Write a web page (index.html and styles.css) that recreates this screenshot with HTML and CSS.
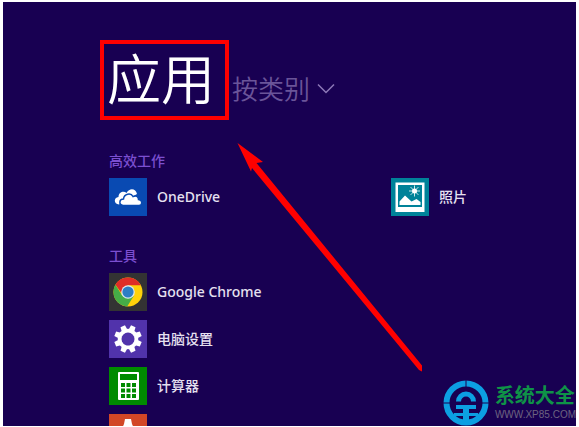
FILE: index.html
```html
<!DOCTYPE html>
<html lang="zh-CN">
<head>
<meta charset="utf-8">
<title>应用</title>
<link rel="stylesheet" href="styles.css">
</head>
<body>
<main class="screen">
  <header class="header">
    <h1 class="title">应用</h1>
    <label class="sort">
      <select class="sort-select" aria-label="排序方式"><option>按类别</option></select>
      <svg class="chevron" width="18" height="11" viewBox="0 0 18 11"><path d="M1 1.500 9 9.500 17 1.500" fill="none" stroke="#8d78b8" stroke-width="1.500"/></svg>
    </label>
  </header>

  <div class="columns">
    <div class="column">
      <section class="group">
        <h2 class="group-title">高效工作</h2>
        <a class="app" href="#">
          <svg class="tile" viewBox="0 0 38 38"><rect width="38" height="38" fill="#094ab2"/><path d="M10 26.500C4.500 26 4.500 19.500 9.500 19 9.500 14 15 12.500 17.500 15 20.500 9.500 27 10.500 28 16Z" fill="#fff"/><path d="M14 27.500C9.500 27 10 21 14.500 21 15 15.500 22 14.500 24 18.500 27 17 29.500 18.500 29.500 21.500 34 22 33.500 27.500 30 27.500Z" fill="#fff" stroke="#094ab2" stroke-width="1.500"/></svg>
          <span>OneDrive</span>
        </a>
      </section>
      <section class="group">
        <h2 class="group-title">工具</h2>
        <a class="app" href="#">
          <svg class="tile" viewBox="0 0 38 38"><rect width="38" height="38" fill="#333"/><circle cx="19" cy="19" r="14.500" fill="#ffd20a"/><path d="M6.400 11.800A14.500 14.500 0 0 1 31.800 12.200H19L12.500 20Z" fill="#df2e27"/><path d="M6.400 11.800A14.500 14.500 0 0 0 18.200 33.500L25 22.500 19 25 12.800 22Z" fill="#45ad47"/><circle cx="19" cy="19" r="6.800" fill="#dfe8f0"/><circle cx="19" cy="19" r="5.600" fill="#2d7ec4"/></svg>
          <span>Google Chrome</span>
        </a>
        <a class="app" href="#">
          <svg class="tile" viewBox="0 0 38 38"><rect width="38" height="38" fill="#5133ab"/><g fill="#fff" transform="translate(19 19) rotate(22.500)"><g id="teeth"><path id="bar" d="M-3-9-2.400-13.800H2.400L3-9V9L2.400 13.800H-2.400L-3 9Z"/><use href="#bar" transform="rotate(90)"/></g><use href="#teeth" transform="rotate(45)"/><circle r="10.300"/><circle r="6.500" fill="#5133ab"/></g></svg>
          <span>电脑设置</span>
        </a>
        <a class="app" href="#">
          <svg class="tile" viewBox="0 0 38 38"><rect width="38" height="38" fill="#008a00"/><rect x="9" y="5" width="21" height="28" rx="1" fill="#fff"/><path d="M11 7H28V13H11ZM12 16h4v4h-4ZM17.500 16h4v4h-4ZM23 16h4v4h-4ZM12 21.500h4v4h-4ZM17.500 21.500h4v4h-4ZM23 21.500h4v4h-4ZM12 27h4v4h-4ZM17.500 27h4v4h-4ZM23 27h4v4h-4Z" fill="#008a00"/></svg>
          <span>计算器</span>
        </a>
        <a class="app" href="#" aria-label="应用">
          <svg class="tile" viewBox="0 0 38 38"><rect width="38" height="38" fill="#d24726"/><path d="M16 5H22L23 10 27 19H11L15 10Z" fill="#fff"/></svg>
        </a>
      </section>
    </div>
    <div class="column column-end">
      <a class="app" href="#">
        <svg class="tile" viewBox="0 0 38 38"><rect width="38" height="38" fill="#008299"/><path d="M4.500 4.500H33.500V34H4.500Z" fill="#fff"/><path d="M7 7H31V29H7Z" fill="#008299"/><path d="M8.500 27V23.500L14 17.500 20.500 23.500 25.500 21 29.500 24V27Z" fill="#fff"/><circle cx="23.500" cy="13" r="2.500" fill="#fff"/><path d="M23.500 7.500V18.500M18 13H29M19.600 9.100 27.400 16.900M27.400 9.100 19.600 16.900" stroke="#fff" stroke-width=".8"/></svg>
        <span>照片</span>
      </a>
    </div>
  </div>

  <svg class="arrow" width="190" height="232" viewBox="0 0 190 232"><path d="M5.500 3 31 22 24.500 23 190 225.500V231.500L187 230 20 28 19 31.500Z" fill="#f00"/></svg>

  <aside class="brand">
    <svg width="46" height="46" viewBox="0 0 46 46"><circle cx="23" cy="23" r="19.500" fill="none" stroke="#0c9fe2" stroke-width="6"/><path d="M13 21.500A10 10 0 0 1 33 21.500H28A5 5 0 0 0 18 21.500ZM13 25H33V29H26V33H35V36H26V43H20V36H11V33H20V29H13Z" fill="#0c9fe2"/><path d="M0 23H8M38 23H46M23 0V8" stroke="#180052"/></svg>
    <div class="brand-text">
      <strong class="brand-name">系统大全</strong>
      <span class="brand-url">WWW.XP85.COM</span>
    </div>
  </aside>
</main>
</body>
</html>
```
FILE: styles.css
```css
* {
  box-sizing: border-box;
}

body {
  margin: 0;
  height: 100vh;
  padding: 2px 3px 1px;
  overflow: hidden;
  background: #fff;
  font-family: "Noto Sans", "Noto Sans CJK SC", sans-serif;
}

.screen {
  position: relative;
  height: 100%;
  padding: 38px 0 0 97px;
  overflow: hidden;
  background: #180052;
  color: #e6e0f0;
}

.header {
  display: flex;
  align-items: center;
  gap: 3px;
}

.title {
  margin: 0;
  padding: 0 10px 6px 3px;
  border: 4px solid #f00;
  color: #fff;
  font: 350 54px/66px "Noto Sans CJK SC", sans-serif;
}

.sort {
  display: flex;
  align-items: center;
  gap: 6px;
  padding-top: 16px;
}

.sort-select {
  appearance: none;
  padding: 0;
  border: 0;
  background: none;
  color: #6a5499;
  font: 350 26px/36px "Noto Sans CJK SC", sans-serif;
}

.columns {
  display: grid;
  grid-template-columns: 282px 1fr;
  padding: 31px 0 0 9px;
}

.column {
  display: flex;
  flex-direction: column;
  gap: 30px;
}

.column-end {
  padding-top: 27px;
}

.group {
  display: flex;
  flex-direction: column;
  gap: 9px;
}

.group-title {
  margin: 0 0 -2px;
  color: #7b4fd0;
  font-size: 14px;
  font-weight: 500;
  line-height: 20px;
}

.app {
  display: flex;
  align-items: center;
  gap: 10px;
  color: inherit;
  font-size: 14px;
  font-weight: 500;
  line-height: 20px;
  text-decoration: none;
}

.tile {
  flex: none;
  width: 38px;
  height: 38px;
}

.arrow {
  position: absolute;
  top: 138px;
  left: 229px;
}

.brand {
  position: absolute;
  right: 0;
  bottom: 0;
  display: flex;
  align-items: center;
  gap: 6px;
}

.brand-text {
  display: flex;
  flex-direction: column;
}

.brand-name {
  color: #0f9347;
  font-size: 20px;
  line-height: 24px;
}

.brand-url {
  color: #6d6480;
  font: 10px/14px "Liberation Sans", sans-serif;
}
```
